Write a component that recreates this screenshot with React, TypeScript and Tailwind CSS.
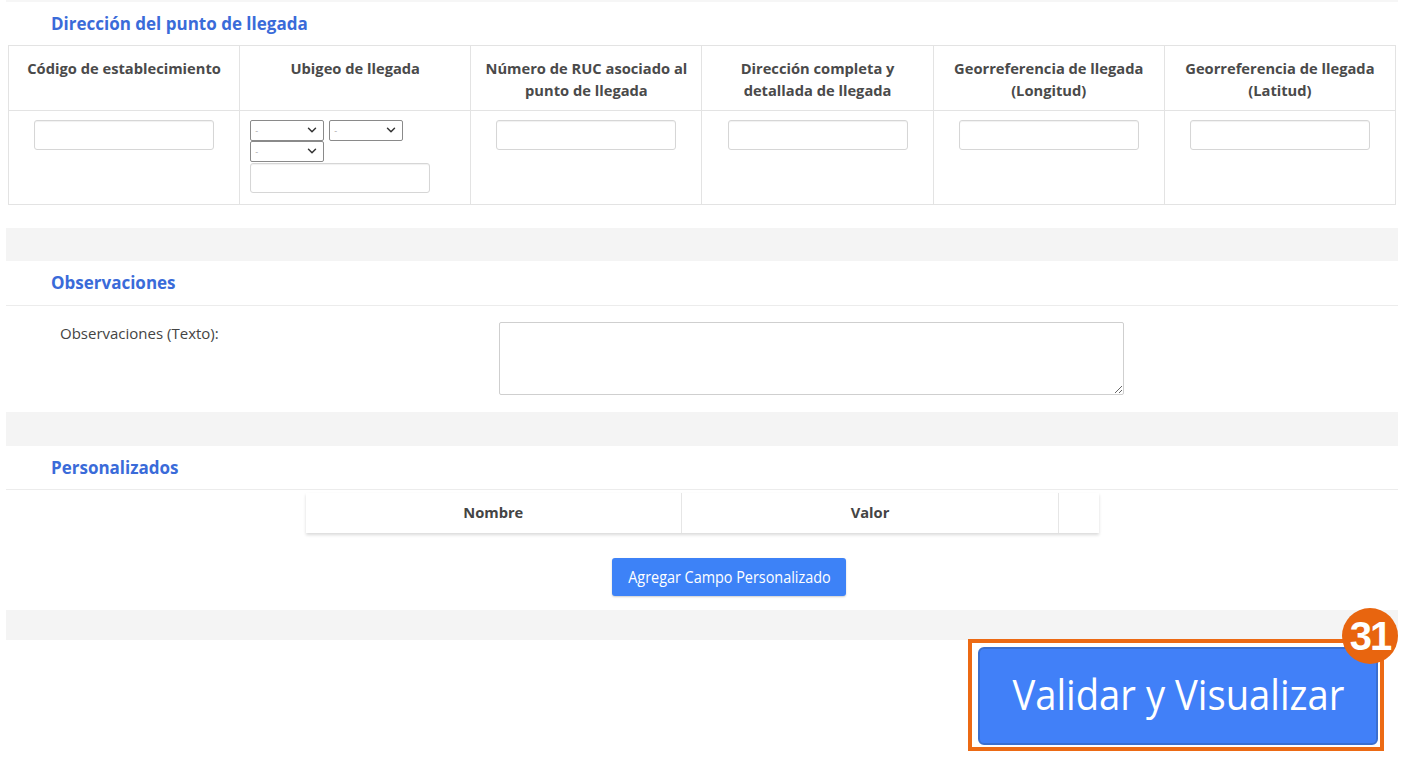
import React from 'react';
import { ChevronDown } from 'lucide-react';

const headers: string[][] = [
  ['Código de establecimiento'],
  ['Ubigeo de llegada'],
  ['Número de RUC asociado al', 'punto de llegada'],
  ['Dirección completa y', 'detallada de llegada'],
  ['Georreferencia de llegada', '(Longitud)'],
  ['Georreferencia de llegada', '(Latitud)'],
];

const TextInput: React.FC<{ className?: string }> = ({ className = '' }) => (
  <input
    type="text"
    className={`h-[30px] w-[180px] rounded-[3px] border border-[#d6d6d6] bg-white shadow-[inset_0_1px_1px_rgba(0,0,0,0.06)] ${className}`}
  />
);

const MiniSelect: React.FC = () => (
  <div className="relative h-[21px] w-[74px]">
    <select className="block h-full w-full appearance-none rounded-[2px] border border-[#8a8a8a] bg-white pl-1 text-[9px] text-[#aaa]">
      <option>-</option>
    </select>
    <ChevronDown
      size={14}
      strokeWidth={2.5}
      className="pointer-events-none absolute right-[5px] top-[3px] text-[#333]"
    />
  </div>
);

const SectionTitle: React.FC<{ children: React.ReactNode; h?: string }> = ({ children, h = 'h-[44px]' }) => (
  <div className={`flex ${h} items-center border-b border-[#ececec] pl-[45px]`}>
    <h2 className="text-[17px] font-bold text-[#3a6bd9]">{children}</h2>
  </div>
);

const Band: React.FC<{ h: string }> = ({ h }) => <div className={`${h} bg-[#f4f4f4]`} />;

export default function App() {
  return (
    <div className="min-h-[765px] w-full bg-white font-['Open_Sans',_'Noto_Sans',_sans-serif] text-[14px] text-[#444]">
      <div className="w-[1392px] ml-[6px]">
        <div className="h-[2px] bg-[#f6f6f6]" />

        {/* Dirección del punto de llegada */}
        <div className="flex h-[43px] items-center pl-[45px]">
          <h2 className="text-[17px] font-bold text-[#3a6bd9]">Dirección del punto de llegada</h2>
        </div>
        <div className="px-[2px]">
          <table className="w-full table-fixed border-collapse border border-[#e3e3e3]">
            <thead>
              <tr className="h-[65px]">
                {headers.map((lines, i) => (
                  <th
                    key={i}
                    className="border border-[#e3e3e3] px-2 pt-[11px] pb-[9px] align-top text-[14.7px] font-bold leading-[22px] text-[#4a4a4a]"
                  >
                    {lines.map((l) => (
                      <div key={l}>{l}</div>
                    ))}
                  </th>
                ))}
              </tr>
            </thead>
            <tbody>
              <tr className="h-[94px]">
                <td className="border border-[#e3e3e3] pt-[9px] align-top text-center">
                  <TextInput />
                </td>
                <td className="border border-[#e3e3e3] pl-[10px] pt-[9px] align-top">
                  <div className="flex gap-[5px]">
                    <MiniSelect />
                    <MiniSelect />
                  </div>
                  <MiniSelect />
                  <TextInput className="mt-[1px] block" />
                </td>
                {[0, 1, 2, 3].map((i) => (
                  <td key={i} className="border border-[#e3e3e3] pt-[9px] align-top text-center">
                    <TextInput />
                  </td>
                ))}
              </tr>
            </tbody>
          </table>
        </div>

        <div className="h-[23px]" />
        <Band h="h-[33px]" />

        {/* Observaciones */}
        <SectionTitle h="h-[45px]">Observaciones</SectionTitle>
        <div className="flex pt-[16px] pb-[17px]">
          <label className="w-[493px] pl-[54px] text-[15px] leading-[22px]">Observaciones (Texto):</label>
          <textarea className="h-[73px] w-[625px] resize rounded-[2px] border border-[#cfcfcf] bg-white" />
        </div>

        <Band h="h-[34px]" />

        {/* Personalizados */}
        <SectionTitle>Personalizados</SectionTitle>
        <div className="flex justify-center pt-[3px]">
          <table className="w-[793px] table-fixed border-collapse shadow-[0_2px_3px_rgba(0,0,0,0.15)]">
            <thead>
              <tr className="h-[40px]">
                <th className="w-[376px] border-r border-[#e6e6e6] pb-[1px] text-[14.7px] font-bold text-[#444]">Nombre</th>
                <th className="w-[377px] border-r border-[#e6e6e6] pb-[1px] text-[14.7px] font-bold text-[#444]">Valor</th>
                <th className="w-[40px]" />
              </tr>
            </thead>
          </table>
        </div>
        <div className="flex justify-center pl-[54px] pt-[25px] pb-[14px]">
          <button className="h-[38px] w-[234px] rounded-[3px] bg-[#3d82f7] text-[16px] text-white shadow-[0_1px_2px_rgba(0,0,0,0.2)]">
            <span className="inline-block scale-x-[0.9] whitespace-nowrap">Agregar Campo Personalizado</span>
          </button>
        </div>

        <Band h="h-[30px]" />
      </div>

      {/* Validar y Visualizar */}
      <div className="-mt-[1px] flex justify-end pr-[37px]">
        <div className="relative border-4 border-[#ec6a14] pl-[6px] pt-[4px] pr-[2px] pb-[2px]">
          <button className="flex h-[98px] w-[400px] items-center justify-center rounded-[6px] border-2 border-[#3a6fd0] bg-[#4180f8] pb-[4px] text-white">
            <span className="inline-block scale-x-[0.91] whitespace-nowrap text-[42px] leading-none">
              Validar y Visualizar
            </span>
          </button>
          <div className="absolute -right-[18px] -top-[35px] flex h-[56px] w-[56px] items-center justify-center rounded-full bg-[#e8650f] font-['Liberation_Sans',_sans-serif] text-[40px] font-bold tracking-[-2px] text-white">
            31
          </div>
        </div>
      </div>
    </div>
  );
}
